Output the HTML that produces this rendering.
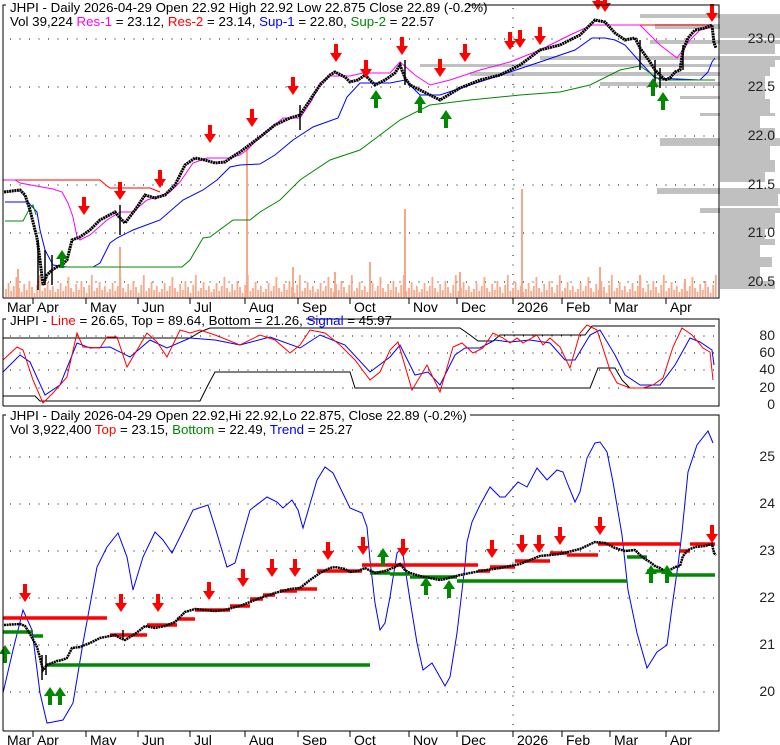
<!DOCTYPE html>
<html><head><meta charset="utf-8"><style>
html,body{margin:0;padding:0;background:#fff;}
svg{display:block;font-family:"Liberation Sans",sans-serif;}
</style></head><body>
<svg width="780" height="745" xmlns="http://www.w3.org/2000/svg" xmlns:xlink="http://www.w3.org/1999/xlink">
<defs>
<path id="dn" d="M-2 -18h4v9h4l-6 9-6-9h4z" fill="#f00"/>
<path id="up" d="M-2 18h4v-9h4l-6-9-6 9h4z" fill="#080"/>
<pattern id="vol" x="5" y="0" width="52" height="298" patternUnits="userSpaceOnUse">
<path d="M1 297v-8m2.6 8v-14m2.6 14v-6m2.6 6v-11m2.6 11v-20m2.6 20v-9m2.6 9v-5m2.6 5v-13m2.6 13v-7m2.6 7v-16m2.6 16v-10m2.6 10v-4m2.6 4v-12m2.6 12v-22m2.6 22v-6m2.6 6v-9m2.6 9v-15m2.6 15v-7m2.6 7v-11m2.6 11v-5" stroke="#f9a88a" stroke-width="1.8" fill="none"/>
</pattern>
</defs>
<g fill="#c0c0c0">
<rect x="640" y="14" width="140" height="4"/><rect x="720" y="18" width="60" height="6"/><rect x="655" y="24" width="125" height="5"/>
<rect x="720" y="29" width="60" height="9"/><rect x="650" y="40" width="130" height="4"/><rect x="720" y="44" width="55" height="10"/>
<rect x="540" y="56" width="240" height="4"/><rect x="720" y="60" width="55" height="4"/><rect x="420" y="64" width="355" height="3"/>
<rect x="720" y="67" width="50" height="5"/><rect x="470" y="72" width="300" height="4"/><rect x="720" y="76" width="45" height="6"/>
<rect x="600" y="82" width="165" height="4"/><rect x="720" y="86" width="45" height="10"/><rect x="680" y="96" width="85" height="3"/>
<rect x="720" y="99" width="50" height="14"/><rect x="700" y="113" width="75" height="3"/><rect x="720" y="116" width="40" height="12"/>
<rect x="720" y="128" width="55" height="10"/><rect x="660" y="138" width="120" height="8"/><rect x="720" y="146" width="50" height="14"/>
<rect x="720" y="160" width="55" height="12"/><rect x="720" y="172" width="45" height="10"/><rect x="657" y="188" width="123" height="6"/>
<rect x="720" y="194" width="58" height="12"/><rect x="700" y="208" width="80" height="5"/><rect x="720" y="213" width="55" height="16"/>
<rect x="720" y="229" width="45" height="10"/><rect x="720" y="239" width="55" height="6"/><rect x="720" y="245" width="40" height="12"/>
<rect x="720" y="257" width="52" height="10"/><rect x="720" y="267" width="40" height="14"/><rect x="720" y="281" width="55" height="8"/>
</g>
<g stroke="#000" stroke-dasharray="1,8.5">
<path d="M10 39H716M10 87H716M10 136H716M10 185H716M10 233H716M10 282H716M513 8V298"/>
<path d="M10 336H716M10 353H716M10 370H716M10 388H716M513 322V406"/>
<path d="M10 457H716M10 504H716M10 551H716M10 598H716M10 645H716M10 692H716M513 420V731"/>
</g>
<rect x="5" y="260" width="712" height="38" fill="url(#vol)"/>
<path d="M120 297v-50M247 297v-150M405 297v-88M522 297v-108M293 297v-30M370 297v-35M335 297v-25M460 297v-25M18 297v-28M600 297v-30M640 297v-22M685 297v-18" stroke="#f9a88a" stroke-width="2" fill="none"/>
<g fill="none" stroke-width="1">
<polyline stroke="#f00" points="3,180 100,180 107,186 110,188 150,188 160,192"/>
<polyline stroke="#f00" points="640,25 712,25"/>
<polyline stroke="#f0f" points="5,180 15,180 20,183 53,189 62,192 68,203 73,217 77,237 80,240 90,235 107,220 120,212 133,212 147,200 157,197 170,192 180,182 193,163 207,158 230,158 240,155 247,150 260,137 283,118 300,118 312,100 320,83 330,76 350,76 363,73 390,73 400,62 415,75 430,85 450,80 480,70 510,62 540,50 570,35 592,25 640,25 660,45 677,58 690,40 700,30 712,27"/>
<polyline stroke="#00f" points="5,202 28,202 37,212 40,230 45,250 53,265 67,267 93,267 100,263 110,243 117,238 133,230 160,220 183,200 203,190 217,180 230,167 240,165 260,164 275,155 293,140 313,127 338,118 347,97 360,83 390,83 405,80 420,95 440,95 470,85 510,72 540,62 575,50 592,38 605,38 615,40 625,45 640,62 655,78 700,80 708,72 712,62 715,58"/>
<polyline stroke="#080" points="5,221 23,221 30,208 33,205 36,215"/>
<polyline stroke="#080" points="60,267 182,267 190,260 203,238 210,237 233,220 250,220 260,212 280,200 300,180 330,160 360,150 380,135 400,120 430,105 470,100 520,95 560,92 590,85 620,70 640,66 660,80 715,80"/>
</g>
<polyline fill="none" stroke="#000" stroke-width="3" stroke-dasharray="2,0.6" points="4,192 20,190 25,195 30,210 37,238 40,260 43,285 47,275 52,270 57,267 62,265 67,260 72,240 80,237 90,230 100,220 115,212 120,218 125,223 135,210 145,195 155,198 165,195 175,185 185,165 195,158 205,160 215,163 225,162 235,155 240,152 260,137 275,125 290,118 300,115 310,100 320,85 330,75 335,72 345,77 350,82 358,80 365,75 375,85 385,80 395,73 400,65 405,78 410,85 420,90 430,95 440,100 445,97 460,88 480,80 500,75 520,65 540,50 560,45 580,35 595,20 605,22 615,33 625,40 635,38 640,48 645,55 650,62 655,70 660,75 665,80 670,78 675,72 680,70 683,50 688,38 695,30 705,28 712,25 714,43 716,48"/>
<path d="M38 240v50M45 250v35M52 255v30M120 205v30M300 105v25M405 60v25M640 40v30M655 60v25M660 68v20M683 45v25" stroke="#000" stroke-width="1.5"/>
<use xlink:href="#dn" x="84" y="215"/><use xlink:href="#dn" x="120" y="200"/><use xlink:href="#dn" x="160" y="188"/><use xlink:href="#dn" x="210" y="143"/><use xlink:href="#dn" x="252" y="127"/><use xlink:href="#dn" x="293" y="95"/><use xlink:href="#dn" x="336" y="62"/><use xlink:href="#dn" x="366" y="78"/><use xlink:href="#dn" x="402" y="55"/><use xlink:href="#dn" x="440" y="77"/><use xlink:href="#dn" x="465" y="62"/><use xlink:href="#dn" x="510" y="50"/><use xlink:href="#dn" x="520" y="48"/><use xlink:href="#dn" x="540" y="45"/><use xlink:href="#dn" x="598" y="10"/><use xlink:href="#dn" x="605" y="12"/><use xlink:href="#dn" x="712" y="22"/>
<use xlink:href="#up" x="62" y="250"/><use xlink:href="#up" x="376" y="90"/><use xlink:href="#up" x="420" y="95"/><use xlink:href="#up" x="446" y="110"/><use xlink:href="#up" x="653" y="78"/><use xlink:href="#up" x="663" y="92"/>
<path d="M3 298V5H719V298H3" fill="none" stroke="#000"/>
<g font-size="14" fill="#222" text-anchor="end">
<text x="775" y="43">23.0</text><text x="775" y="91">22.5</text><text x="775" y="140">22.0</text><text x="775" y="189">21.5</text><text x="775" y="237">21.0</text><text x="775" y="286">20.5</text>
<text x="775" y="340">80</text><text x="775" y="357">60</text><text x="775" y="374">40</text><text x="775" y="392">20</text><text x="775" y="409">0</text>
<text x="775" y="461">25</text><text x="775" y="508">24</text><text x="775" y="555">23</text><text x="775" y="602">22</text><text x="775" y="649">21</text><text x="775" y="696">20</text>
</g>
<path d="M33 298v6M86 298v6M138 298v6M190 298v6M245 298v6M298 298v6M350 298v6M409 298v6M457 298v6M513 298v6M562 298v6M610 298v6M666 298v6M33 731v6M86 731v6M138 731v6M190 731v6M245 731v6M298 731v6M350 731v6M409 731v6M457 731v6M513 731v6M562 731v6M610 731v6M666 731v6" stroke="#000"/>
<g font-size="14">
<text x="7" y="312">Mar</text><text x="37" y="312">Apr</text><text x="90" y="312">May</text><text x="142" y="312">Jun</text><text x="194" y="312">Jul</text><text x="249" y="312">Aug</text><text x="302" y="312">Sep</text><text x="354" y="312">Oct</text><text x="413" y="312">Nov</text><text x="461" y="312">Dec</text><text x="517" y="312">2026</text><text x="566" y="312">Feb</text><text x="614" y="312">Mar</text><text x="670" y="312">Apr</text>
<text x="7" y="745">Mar</text><text x="37" y="745">Apr</text><text x="90" y="745">May</text><text x="142" y="745">Jun</text><text x="194" y="745">Jul</text><text x="249" y="745">Aug</text><text x="302" y="745">Sep</text><text x="354" y="745">Oct</text><text x="413" y="745">Nov</text><text x="461" y="745">Dec</text><text x="517" y="745">2026</text><text x="566" y="745">Feb</text><text x="614" y="745">Mar</text><text x="670" y="745">Apr</text>
</g>
<rect x="6" y="0" width="462" height="12" fill="#fff"/>
<g font-size="13.3">
<text x="10" y="12">JHPI - Daily 2026-04-29 Open 22.92  High 22.92  Low 22.875  Close 22.89 (-0.2%)</text>
<text x="10" y="26">Vol 39,224 <tspan fill="#f0f">Res-1</tspan> = 23.12, <tspan fill="#f00">Res-2</tspan> = 23.14, <tspan fill="#00f">Sup-1</tspan> = 22.80, <tspan fill="#080">Sup-2</tspan> = 22.57</text>
</g>
<g fill="none">
<polyline stroke="#000" points="3,338 190,338 200,332 210,328 460,328 470,335 478,341 493,341 500,335 585,335 592,326 715,326"/>
<polyline stroke="#000" points="3,396 35,396 40,401 200,401 208,385 215,372 350,372 355,388 590,388 598,368 615,368 622,380 630,388 715,388"/>
<polyline stroke="#00f" points="3,372 20,355 30,362 45,395 60,385 77,343 90,348 110,347 130,357 150,340 167,348 190,338 215,340 240,345 270,337 300,348 320,335 345,345 370,372 390,357 400,345 415,375 428,372 440,385 455,355 465,348 480,348 495,340 510,342 530,340 550,343 565,360 575,360 590,335 600,330 615,355 625,375 640,385 660,385 675,365 690,338 700,342 712,350 714,365"/>
<polyline stroke="#f00" points="3,360 17,347 23,350 33,380 43,403 53,393 67,377 77,333 83,347 100,348 107,337 117,337 127,367 147,333 157,342 167,357 180,330 190,333 200,330 215,335 240,345 260,335 275,340 290,353 300,345 310,330 325,333 340,345 355,360 370,380 380,372 390,350 398,342 412,390 427,365 440,392 453,347 462,343 473,353 483,348 493,333 503,338 510,343 517,338 523,343 537,335 543,345 550,338 560,347 570,368 580,333 587,325 597,330 610,370 617,383 630,388 643,388 653,385 663,378 673,347 682,328 692,335 703,348 710,352 713,380"/>
</g>
<path d="M3 406V319H719V406H3" fill="none" stroke="#000"/>
<rect x="6" y="313" width="300" height="12" fill="#fff"/>
<text x="10" y="325" font-size="13.3">JHPI - <tspan fill="#f00">Line</tspan> = 26.65, Top = 89.64, Bottom = 21.26, <tspan fill="#00f">Signal</tspan> = 45.97</text>
<polyline fill="none" stroke="#00f" points="3,693 13,650 23,610 32,630 40,693 47,723 53,722 63,720 73,703 83,643 97,567 107,547 118,533 127,557 133,590 143,557 155,532 163,540 172,553 180,537 193,510 208,505 215,527 227,567 235,563 250,510 267,497 277,502 283,508 292,500 298,510 303,528 317,480 325,467 333,473 350,508 362,513 367,527 370,560 375,603 380,630 385,623 390,597 397,553 402,548 410,600 417,643 423,670 432,663 445,686 450,677 457,633 465,565 467,542 472,522 480,505 490,487 500,497 505,497 518,482 527,487 537,468 547,480 557,470 563,472 568,485 575,502 580,492 587,458 595,443 600,442 607,452 613,482 622,535 628,590 637,633 647,668 657,652 667,645 673,600 678,565 682,532 688,472 697,445 708,431 713,443"/>
<path fill="none" stroke="#f00" stroke-width="3.5" d="M3 618H107M110 635H147M147 625H177M177 619H195M195 610H230M230 606H250M250 599H263M263 595H275M280 591H297M297 589H317M317 571H362M362 565H478M478 571H490M490 567H515M515 561H550M550 553H567M567 555H598M598 544H680M680 551H690M690 544H715"/>
<path fill="none" stroke="#080" stroke-width="3.5" d="M3 632H33M33 636H43M47 665H370M370 573H390M390 574H410M410 577H457M457 581H627M627 557H647M647 571H667M667 575H715"/>
<polyline fill="none" stroke="#000" stroke-width="2.5" stroke-dasharray="2,0.6" points="4,625 20,624 25,626 30,634 37,647 40,658 43,670 47,665 52,663 57,661 62,660 67,658 72,648 80,647 90,643 100,638 115,635 120,638 125,640 135,634 145,626 155,628 165,626 175,622 185,612 195,609 205,610 215,611 225,610 235,607 240,606 260,598 275,593 290,589 300,588 310,580 320,573 330,568 335,567 345,569 350,572 358,571 365,568 375,573 385,571 395,567 400,564 405,570 410,573 420,576 430,578 440,580 445,579 460,575 480,571 500,568 520,564 540,556 560,554 580,549 595,542 605,543 615,548 625,551 635,550 640,555 645,559 650,562 655,566 660,568 665,571 670,570 675,567 680,566 683,556 688,550 695,547 705,546 712,544 714,553 716,555"/>
<path d="M42 655v25M46 655v20M123 630v10" stroke="#000" stroke-width="1.5"/>
<use xlink:href="#dn" x="25" y="602"/><use xlink:href="#dn" x="121" y="612"/><use xlink:href="#dn" x="158" y="612"/><use xlink:href="#dn" x="209" y="600"/><use xlink:href="#dn" x="243" y="587"/><use xlink:href="#dn" x="272" y="577"/><use xlink:href="#dn" x="295" y="577"/><use xlink:href="#dn" x="328" y="560"/><use xlink:href="#dn" x="363" y="555"/><use xlink:href="#dn" x="403" y="557"/><use xlink:href="#dn" x="492" y="558"/><use xlink:href="#dn" x="522" y="553"/><use xlink:href="#dn" x="539" y="553"/><use xlink:href="#dn" x="560" y="545"/><use xlink:href="#dn" x="600" y="535"/><use xlink:href="#dn" x="712" y="543"/>
<use xlink:href="#up" x="5" y="645"/><use xlink:href="#up" x="50" y="687"/><use xlink:href="#up" x="60" y="687"/><use xlink:href="#up" x="383" y="548"/><use xlink:href="#up" x="426" y="577"/><use xlink:href="#up" x="449" y="580"/><use xlink:href="#up" x="651" y="565"/><use xlink:href="#up" x="667" y="565"/>
<path d="M3 731V415H719V731H3" fill="none" stroke="#000"/>
<rect x="6" y="408" width="464" height="12" fill="#fff"/>
<g font-size="13.3">
<text x="10" y="420">JHPI - Daily 2026-04-29 Open 22.92,Hi 22.92,Lo 22.875, Close 22.89 (-0.2%)</text>
<text x="10" y="434">Vol 3,922,400 <tspan fill="#f00">Top</tspan> = 23.15, <tspan fill="#080">Bottom</tspan> = 22.49, <tspan fill="#00f">Trend</tspan> = 25.27</text>
</g>
</svg>
</body></html>
